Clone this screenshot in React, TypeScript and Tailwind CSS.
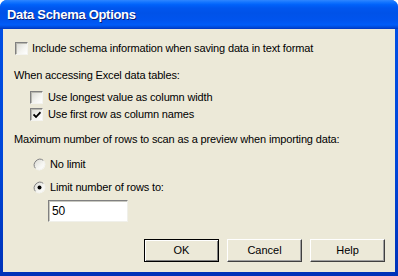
import React from "react";

const font = { fontFamily: '"Liberation Sans", Arial, sans-serif' };

function Check({ checked }: { checked?: boolean }) {
  return (
    <div className="relative w-[13px] h-[13px] shrink-0 border border-t-[#808080] border-l-[#808080] border-b-[#f4f4f0] border-r-[#f4f4f0] bg-[linear-gradient(135deg,#d8d8d2_0%,#f4f4f0_60%,#ffffff_100%)] shadow-[inset_1px_1px_0_#b8b8b0]">
      {checked && (
        <svg className="absolute left-[2px] top-[2px]" width="8" height="8" viewBox="0 0 8 8">
          <path d="M0.5 3.5 L3 6 L7.5 1.2" stroke="#000" strokeWidth="1.8" fill="none" />
        </svg>
      )}
    </div>
  );
}

function Radio({ checked }: { checked?: boolean }) {
  return (
    <svg width="13" height="13" viewBox="0 0 13 13" className="shrink-0">
      <defs>
        <linearGradient id="rg" x1="0" y1="0" x2="1" y2="1">
          <stop offset="0" stopColor="#d6d6d0" />
          <stop offset="0.6" stopColor="#f6f6f2" />
          <stop offset="1" stopColor="#ffffff" />
        </linearGradient>
      </defs>
      <circle cx="6.5" cy="6.5" r="5.7" fill="url(#rg)" />
      <path d="M10.5 2.5 A5.7 5.7 0 0 0 2.5 10.5" stroke="#808080" strokeWidth="1" fill="none" />
      <path d="M2.5 10.5 A5.7 5.7 0 0 0 10.5 2.5" stroke="#f2f2ee" strokeWidth="1" fill="none" />
      {checked && <circle cx="6.5" cy="6.5" r="2" fill="#000" />}
    </svg>
  );
}

function Btn({ label, def }: { label: string; def?: boolean }) {
  return (
    <div
      className={
        "w-[75px] h-[23px] flex items-center justify-center text-[11px] text-black bg-[#ECE9D8] " +
        (def
          ? "border border-black shadow-[inset_1px_1px_0_#ffffff,inset_-1px_-1px_0_#808080]"
          : "border border-t-white border-l-white border-b-[#404040] border-r-[#404040] shadow-[inset_-1px_-1px_0_#a0a0a0]")
      }
    >
      {label}
    </div>
  );
}

export default function App() {
  return (
    <div className="w-[398px] h-[276px] bg-white" style={font}>
      <div className="w-[398px] h-[276px] flex flex-col rounded-t-[7px] overflow-hidden bg-[linear-gradient(180deg,#0050e6_0%,#0046d8_60%,#0032b8_100%)]">
        <div className="h-[29px] shrink-0 flex items-center pl-[7px] bg-[linear-gradient(180deg,#2f86ff_0%,#1274ff_8%,#0062fa_16%,#0056ee_28%,#0052e8_45%,#0054ee_70%,#005cf8_86%,#004ada_94%,#0036c0_100%)]">
          <span className="text-white font-bold text-[13px] leading-none tracking-[-0.3px] [text-shadow:1px_1px_0_#0a1e78]">
            Data Schema Options
          </span>
        </div>
        <div className="flex-1 mx-[3px] mb-[4px] bg-[#ECE9D8] text-[11px] text-black leading-[13px] tracking-[-0.15px] flex flex-col pt-[13px]">
          <div className="flex items-center gap-[4px] ml-[12px] h-[13px]">
            <Check />
            <span>Include schema information when saving data in text format</span>
          </div>
          <div className="ml-[11px] mt-[14px] h-[13px]">When accessing Excel data tables:</div>
          <div className="flex items-center gap-[5px] ml-[27px] mt-[9px] h-[13px]">
            <Check />
            <span>Use longest value as column width</span>
          </div>
          <div className="flex items-center gap-[5px] ml-[27px] mt-[4px] h-[13px]">
            <Check checked />
            <span>Use first row as column names</span>
          </div>
          <div className="ml-[11px] mt-[12px] h-[13px]">
            Maximum number of rows to scan as a preview when importing data:
          </div>
          <div className="flex items-center gap-[4px] ml-[30px] mt-[12px] h-[13px]">
            <Radio />
            <span>No limit</span>
          </div>
          <div className="flex items-center gap-[4px] ml-[30px] mt-[10px] h-[13px]">
            <Radio checked />
            <span>Limit number of rows to:</span>
          </div>
          <div className="ml-[45px] mt-[6px] w-[80px] h-[22px] bg-white border border-t-[#808080] border-l-[#808080] border-b-[#f0f0ea] border-r-[#f0f0ea] shadow-[inset_1px_1px_0_#c8c8c0] flex items-center pl-[3px] text-[12px]">
            50
          </div>
          <div className="flex justify-end gap-[8px] mr-[10px] mt-[17px] tracking-normal">
            <Btn label="OK" def />
            <Btn label="Cancel" />
            <Btn label="Help" />
          </div>
        </div>
      </div>
    </div>
  );
}
